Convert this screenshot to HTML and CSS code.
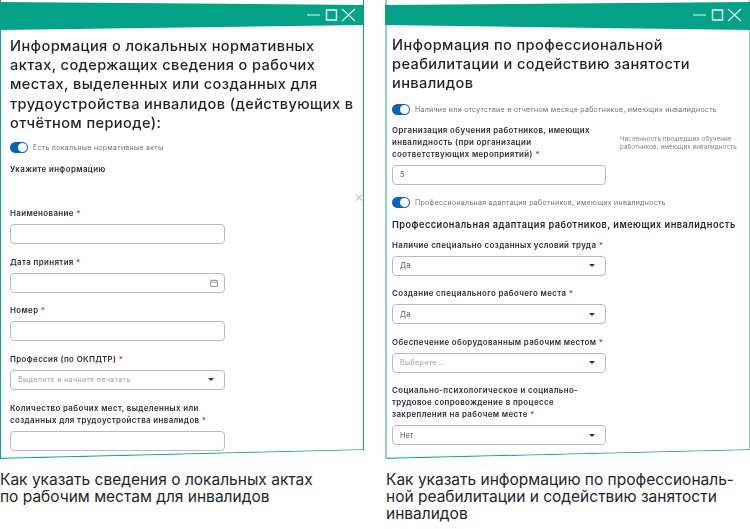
FILE: index.html
```html
<!DOCTYPE html>
<html lang="ru">
<head>
<meta charset="utf-8">
<title>Информация об инвалидах</title>
<link rel="stylesheet" href="styles.css">
</head>
<body>
<main class="page">
  <figure class="col col-left">
    <section class="window win-left">
      <div class="titlebar tb-left">
        <svg class="controls" width="50" height="14" viewBox="0 0 50 14"><path d="M0 7h13M35 1l13 12M48 1L35 13" fill="none" stroke="#e4f5f1" stroke-width="1.2"/><rect x="19.5" y="2" width="10" height="10" fill="none" stroke="#e4f5f1" stroke-width="1.5"/></svg>
      </div>
      <div class="content c-left">
        <h2 class="title">Информация о локальных нормативных<br>актах, содержащих сведения о рабочих<br>местах, выделенных или созданных для<br>трудоустройства инвалидов (действующих в<br>отчётном периоде):</h2>
        <div class="switch-row sw-a"><span class="switch"></span><span class="switch-text">Есть локальные нормативные акты</span></div>
        <p class="label hint">Укажите информацию</p>
        <p class="label l1">Наименование <b>*</b></p>
        <div class="field"></div>
        <p class="label l2">Дата принятия <b>*</b></p>
        <div class="field"><svg class="cal" width="8" height="8" viewBox="0 0 8 8"><path d="M.5 1.5h7v6h-7zM.5 3.2h7M2.2.3v1.5M5.8.3v1.5" fill="none" stroke="#8a8f94" stroke-width=".8"/></svg></div>
        <p class="label l2">Номер <b>*</b></p>
        <div class="field"></div>
        <p class="label l2">Профессия (по ОКПДТР) <b>*</b></p>
        <div class="field select"><span class="ph">Выделите и начните печатать</span><i class="arrow"></i></div>
        <p class="label l4">Количество рабочих мест, выделенных или<br>созданных для трудоустройства инвалидов <b>*</b></p>
        <div class="field"></div>
      </div>
      <span class="dismiss">×</span>
      <svg class="edge" width="364" height="10" viewBox="0 0 364 10" preserveAspectRatio="none"><path d="M0 9.4L364 .8" stroke="#14a58c" stroke-width="1.2" fill="none"/></svg>
    </section>
    <figcaption class="caption">Как указать сведения о локальных актах<br>по рабочим местам для инвалидов</figcaption>
  </figure>
  <figure class="col col-right">
    <section class="window win-right">
      <div class="titlebar tb-right">
        <svg class="controls" width="50" height="14" viewBox="0 0 50 14"><path d="M0 7h13M35 1l13 12M48 1L35 13" fill="none" stroke="#e4f5f1" stroke-width="1.2"/><rect x="19.5" y="2" width="10" height="10" fill="none" stroke="#e4f5f1" stroke-width="1.5"/></svg>
      </div>
      <div class="content c-right">
        <h2 class="title">Информация по профессиональной<br>реабилитации и содействию занятости<br>инвалидов</h2>
        <div class="switch-row sw-b"><span class="switch"></span><span class="switch-text">Наличие или отсутствие в отчетном месяце работников, имеющих инвалидность</span></div>
        <div class="split">
          <p class="label">Организация обучения работников, имеющих<br>инвалидность (при организации<br>соответствующих мероприятий) <b>*</b></p>
          <p class="note">Численность прошедших обучение<br>работников, имеющих инвалидность</p>
        </div>
        <div class="field"><span class="val">5</span></div>
        <div class="switch-row sw-c"><span class="switch"></span><span class="switch-text">Профессиональная адаптация работников, имеющих инвалидность</span></div>
        <h3 class="subtitle">Профессиональная адаптация работников, имеющих инвалидность</h3>
        <p class="label l3">Наличие специально созданных условий труда <b>*</b></p>
        <div class="field select"><span class="val">Да</span><i class="arrow"></i></div>
        <p class="label l2">Создание специального рабочего места <b>*</b></p>
        <div class="field select"><span class="val">Да</span><i class="arrow"></i></div>
        <p class="label l2">Обеспечение оборудованным рабочим местом <b>*</b></p>
        <div class="field select"><span class="ph">Выберите...</span><i class="arrow"></i></div>
        <p class="label l2">Социально-психологическое и социально-<br>трудовое сопровождение в процессе<br>закрепления на рабочем месте <b>*</b></p>
        <div class="field select"><span class="val">Нет</span><i class="arrow"></i></div>
      </div>
      <svg class="edge" width="365" height="10" viewBox="0 0 365 10" preserveAspectRatio="none"><path d="M0 9.4L365 .8" stroke="#14a58c" stroke-width="1.2" fill="none"/></svg>
    </section>
    <figcaption class="caption">Как указать информацию по профессиональ-<br>ной реабилитации и содействию занятости<br>инвалидов</figcaption>
  </figure>
</main>
</body>
</html>
```
FILE: styles.css
```css
* { box-sizing: border-box; margin: 0; padding: 0; }
html, body { width: 750px; height: 529px; overflow: hidden; background: #fff; }
body { font-family: Inter, "Liberation Sans", sans-serif; color: #23262b; }
.page { display: flex; gap: 21px; }
.col { flex: none; }
.col-left { width: 364px; }
.col-right { width: 365px; }

.window { position: relative; height: 459px; clip-path: polygon(0 0, 100% 0, 100% 450px, 0 459px); }
.win-left { border-left: 1px solid #12a58c; border-right: 1px solid #12a58c; }
.win-right { border-left: 2px solid #8fd3c1; border-right: 1px solid #8fd3c1; }
.titlebar { height: 30px; margin: 0 -2px; background: #03a287; display: flex; justify-content: flex-end; padding: 8px 8px 0 0; }
.tb-left { clip-path: polygon(0 2px, 100% 5px, 100% 25px, 0 30px); }
.tb-right { clip-path: polygon(0 5px, 100% 2px, 100% 30px, 0 25px); }
.controls { display: block; flex: none; }
.content { filter: blur(.3px); }
.c-left { padding: 7px 0 0 9px; }
.c-right { padding: 6px 0 0 5px; }

.title { font-size: 14.6px; font-weight: 500; line-height: 19.2px; letter-spacing: .38px; color: #1f2328; }
.switch-row { display: flex; align-items: center; gap: 5px; height: 11px; }
.sw-a { margin-top: 9px; }
.sw-b { margin-top: 10px; }
.sw-c { margin-top: 12px; }
.switch { width: 18px; height: 11px; border-radius: 6px; background: #0c62b8; position: relative; flex: none; }
.switch::after { content: ""; position: absolute; right: 1px; top: 1px; width: 9px; height: 9px; border-radius: 50%; background: #fff; }
.switch-text { font-size: 7px; letter-spacing: .28px; color: #6d7278; white-space: nowrap; }

.label { font-size: 7.9px; font-weight: 600; line-height: 12px; letter-spacing: .38px; color: #2b2f34; margin-bottom: 5px; }
.label b { color: #e2263d; font-weight: 600; }
.hint { margin-top: 10px; }
.l1 { margin-top: 32px; }
.l2 { margin-top: 11.5px; }
.l3 { margin-top: 8px; }
.l4 { margin-top: 12.5px; }

.field { width: 215px; height: 20px; border: 1px solid #b7bcc1; border-radius: 4px; background: #fff; display: flex; align-items: center; padding: 0 7px; position: relative; }
.c-right .field { width: 214px; }
.select { justify-content: space-between; }
.cal { position: absolute; right: 6px; top: 5px; }
.ph { font-size: 7px; letter-spacing: .4px; color: #9a9fa5; }
.val { font-size: 7.5px; color: #55595f; }
.arrow { width: 0; height: 0; border-left: 3px solid transparent; border-right: 3px solid transparent; border-top: 3.5px solid #123a8a; margin-right: 3px; }

.split { display: flex; margin-top: 9px; }
.split .label { width: 228px; flex: none; }
.note { font-size: 6.2px; line-height: 8px; letter-spacing: .12px; color: #7d8287; margin-top: 11px; }
.subtitle { font-size: 9.2px; font-weight: 600; line-height: 12px; letter-spacing: .48px; margin-top: 11px; white-space: nowrap; color: #1f2328; }

.dismiss { position: absolute; left: 353px; top: 188px; font-size: 15px; line-height: 18px; color: #c5c8ca; }
.edge { position: absolute; left: 0; bottom: 0; display: block; }
.caption { font-size: 15.5px; line-height: 17px; color: #24262a; margin-top: 11.5px; white-space: nowrap; }
.col-right .caption { padding-left: 1px; }
```
